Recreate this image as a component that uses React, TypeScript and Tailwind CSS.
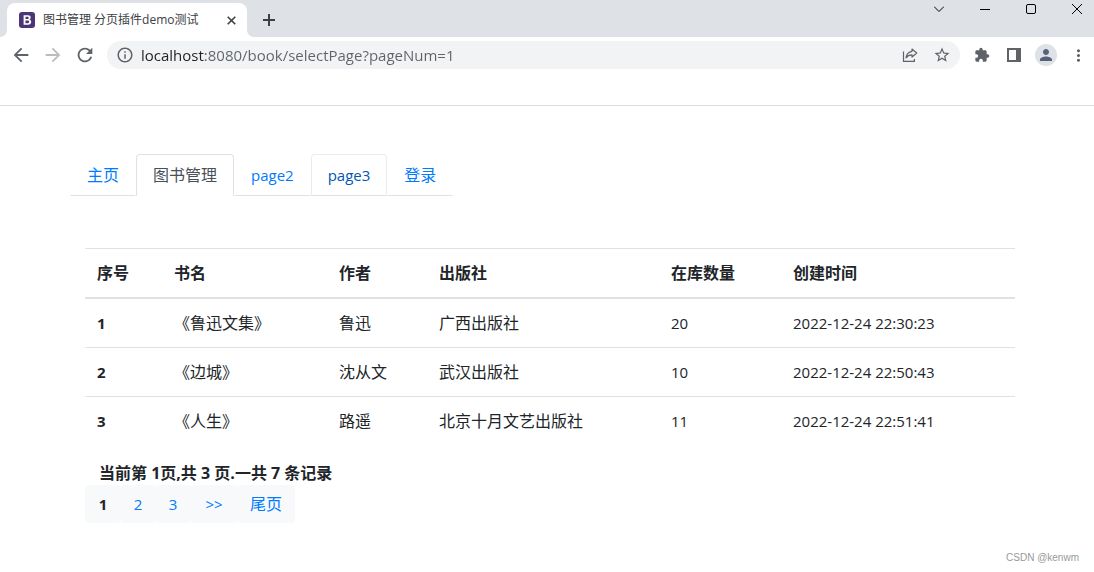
import { useState } from "react";
import {
  MdArrowBack,
  MdArrowForward,
  MdExtension,
  MdInfoOutline,
  MdMoreVert,
  MdPerson,
  MdRefresh,
  MdStarBorder,
} from "react-icons/md";

type Book = {
  id: number;
  name: string;
  author: string;
  press: string;
  count: number;
  createTime: string;
};

const books: Book[] = [
  { id: 1, name: "《鲁迅文集》", author: "鲁迅", press: "广西出版社", count: 20, createTime: "2022-12-24 22:30:23" },
  { id: 2, name: "《边城》", author: "沈从文", press: "武汉出版社", count: 10, createTime: "2022-12-24 22:50:43" },
  { id: 3, name: "《人生》", author: "路遥", press: "北京十月文艺出版社", count: 11, createTime: "2022-12-24 22:51:41" },
];

const columns = [
  { title: "序号", width: "w-[77px]" },
  { title: "书名", width: "w-[165px]" },
  { title: "作者", width: "w-[100px]" },
  { title: "出版社", width: "w-[232px]" },
  { title: "在库数量", width: "w-[122px]" },
  { title: "创建时间", width: "" },
];

const tabs = [
  { title: "主页", style: "text-base border-transparent border-b-[#dee2e6] text-[#007bff]" },
  { title: "图书管理", style: "text-base border-[#dee2e6] border-b-white text-[#495057]" },
  { title: "page2", style: "text-[15px] border-transparent border-b-[#dee2e6] text-[#007bff]" },
  { title: "page3", style: "text-[15px] border-[#e9ecef] border-b-[#dee2e6] text-[#0056b3]" },
  { title: "登录", style: "text-base border-transparent border-b-[#dee2e6] text-[#007bff]" },
];

const pages = [
  { title: "1", style: "min-w-9 text-[15px] font-bold" },
  { title: "2", style: "min-w-9 text-[15px] text-[#007bff]" },
  { title: "3", style: "min-w-9 text-[15px] text-[#007bff]" },
  { title: ">>", style: "min-w-12 text-[15px] text-[#007bff]" },
  { title: "尾页", style: "text-base text-[#007bff]" },
];

const TabStrip = () => (
  <div className="flex h-[37px] justify-between bg-[#dee1e6]">
    <div className="flex items-end">
      {/* Curves at the foot of the active tab */}
      <svg className="h-[7px] w-[7px]" viewBox="0 0 7 7" fill="#fff" aria-hidden="true">
        <path d="M7 0v7H0a7 7 0 0 0 7-7z" />
      </svg>
      <div className="flex h-[34px] w-60 items-center rounded-t-lg bg-white pl-3 pr-2">
        <svg className="h-4 w-4 shrink-0" viewBox="0 0 16 16" aria-hidden="true">
          <rect width="16" height="16" rx="3" fill="#4b3576" />
          <path
            d="M4.6 3.200h4.400c1.700 0 2.700.8 2.700 2.200 0 1-.6 1.800-1.500 2.100 1.200.2 2 1.100 2 2.300 0 1.800-1.200 2.900-3.100 2.900H4.600z M6.500 7h1.700c1 0 1.500-.4 1.500-1.200s-.5-1.100-1.400-1.100H6.500z M6.500 11.200h2c1.100 0 1.700-.5 1.700-1.400s-.6-1.400-1.800-1.400H6.500z"
            fill="#fff"
            fillRule="evenodd"
          />
        </svg>
        <span className="ml-2 flex-1 truncate text-xs text-[#3c4043]">图书管理 分页插件demo测试</span>
        <button type="button" aria-label="关闭标签页" className="flex h-4 w-4 items-center justify-center">
          <svg className="h-[9px] w-[9px]" viewBox="0 0 9 9" stroke="#3c4043" strokeWidth="1.6">
            <path d="M.7.7l7.600 7.600M8.300.7L.7 8.300" />
          </svg>
        </button>
      </div>
      <svg className="h-[7px] w-[7px]" viewBox="0 0 7 7" fill="#fff" aria-hidden="true">
        <path d="M0 0v7h7a7 7 0 0 1-7-7z" />
      </svg>
      <button type="button" aria-label="新标签页" className="ml-[7px] flex h-[34px] w-4 items-center justify-center">
        <svg className="h-3 w-3" viewBox="0 0 12 12" stroke="#3c4043" strokeWidth="2">
          <path d="M6 0v12M0 6h12" />
        </svg>
      </button>
    </div>

    <div className="flex h-[18px] items-center gap-9 pr-3">
      <button type="button" aria-label="搜索标签页">
        <svg className="h-[10px] w-[10px]" viewBox="0 0 10 10" fill="none" stroke="#000">
          <path d="M0 2.500l5 5 5-5" />
        </svg>
      </button>
      <button type="button" aria-label="最小化">
        <svg className="h-[10px] w-[10px]" viewBox="0 0 10 10" stroke="#000">
          <path d="M0 5.500h10" />
        </svg>
      </button>
      <button type="button" aria-label="最大化">
        <svg className="h-[10px] w-[10px]" viewBox="0 0 10 10" fill="none" stroke="#000">
          <rect x=".5" y=".5" width="9" height="9" rx="1.500" />
        </svg>
      </button>
      <button type="button" aria-label="关闭">
        <svg className="h-[10px] w-[10px]" viewBox="0 0 10 10" stroke="#000">
          <path d="M0 0l10 10M10 0L0 10" />
        </svg>
      </button>
    </div>
  </div>
);

const toolButton = "flex h-7 w-8 shrink-0 items-center justify-center";

const Toolbar = () => {
  const [url, setUrl] = useState("localhost:8080/book/selectPage?pageNum=1");

  return (
    <div className="flex h-9 items-center pl-[5px] text-[#5f6368]">
      <button type="button" aria-label="后退" className={toolButton}>
        <MdArrowBack size={22} />
      </button>
      <button type="button" aria-label="前进" className={`${toolButton} text-[#babcbe]`}>
        <MdArrowForward size={22} />
      </button>
      <button type="button" aria-label="重新加载" className={toolButton}>
        <MdRefresh size={22} />
      </button>

      <div className="mx-1.5 flex h-7 flex-1 items-center rounded-full bg-[#f1f3f4] pl-[9px] pr-0.5">
        <MdInfoOutline size={18} className="shrink-0" />
        {/* host part is darker than the path */}
        <input
          type="text"
          aria-label="地址栏"
          value={url}
          onChange={(e) => setUrl(e.target.value)}
          className="ml-[7px] min-w-0 flex-1 bg-[linear-gradient(to_right,#202124_64px,#5f6368_64px)] bg-clip-text text-[15px] text-transparent caret-black outline-none"
        />
        <button type="button" aria-label="分享" className={toolButton}>
          <svg className="h-4 w-4" viewBox="0 0 16 16" fill="none" stroke="currentColor" strokeWidth="1.2">
            <path d="M1.500 4.500v9.900h10.900v-2.400" />
            <path d="M10 2l4.700 4-4.700 4V7.900c-2.500 0-4.500.8-6 2.900.5-3.500 2.600-6 6-6.500z" strokeLinejoin="round" />
          </svg>
        </button>
        <button type="button" aria-label="收藏" className={toolButton}>
          <MdStarBorder size={18} />
        </button>
      </div>

      <button type="button" aria-label="扩展程序" className={toolButton}>
        <MdExtension size={16} />
      </button>
      <button type="button" aria-label="侧边栏" className={toolButton}>
        <svg className="h-[14px] w-[14px]" viewBox="0 0 14 14" fill="currentColor">
          <path d="M0 0h14v14H0z M2 2v10h7V2z" fillRule="evenodd" />
        </svg>
      </button>
      <button type="button" aria-label="用户" className={toolButton}>
        <span className="flex h-[22px] w-[22px] items-center justify-center rounded-full bg-[#dee1e6] text-[#56617a]">
          <MdPerson size={18} />
        </span>
      </button>
      <button type="button" aria-label="更多" className={toolButton}>
        <MdMoreVert size={19} />
      </button>
    </div>
  );
};

const BookTable = () => (
  <table className="mb-4 w-full table-fixed border-collapse">
    <thead>
      <tr className="border-b-2 border-t border-[#dee2e6]">
        {columns.map((col) => (
          <th key={col.title} scope="col" className={`p-3 text-left font-bold ${col.width}`}>
            {col.title}
          </th>
        ))}
      </tr>
    </thead>
    <tbody>
      {books.map((book) => (
        <tr key={book.id} className="border-t border-[#dee2e6]">
          <th scope="row" className="p-3 text-left text-[15px] font-bold">{book.id}</th>
          <td className="p-3">{book.name}</td>
          <td className="p-3">{book.author}</td>
          <td className="p-3">{book.press}</td>
          <td className="p-3 text-[15px]">{book.count}</td>
          <td className="p-3 text-[15px]">{book.createTime}</td>
        </tr>
      ))}
    </tbody>
  </table>
);

const App = () => {
  return (
    <div className="relative min-h-screen bg-white font-['Open_Sans','Noto_Sans_CJK_SC',sans-serif] text-base text-[#212529]">
      {/* Browser */}
      <header className="h-[106px] border-b border-[#dadce0]">
        <TabStrip />
        <Toolbar />
      </header>

      {/* Page */}
      <main className="pl-[70px] pr-16 pt-12">
        <nav className="flex">
          {tabs.map((tab) => (
            <a key={tab.title} href="#" className={`rounded-t border px-4 py-2 leading-6 ${tab.style}`}>
              {tab.title}
            </a>
          ))}
        </nav>

        <div className="px-[15px] pt-[52px]">
          <BookTable />
          <p className="pl-[14px] font-bold leading-6">当前第 1页,共 3 页.一共 7 条记录</p>
          <div className="flex">
            {pages.map((page) => (
              <button
                key={page.title}
                type="button"
                className={`-mr-px rounded border border-[#f8f9fa] bg-[#f8f9fa] px-3 py-1.5 leading-6 ${page.style}`}
              >
                {page.title}
              </button>
            ))}
          </div>
        </div>
      </main>

      <span className="absolute bottom-1.5 right-[15px] font-['Liberation_Sans',sans-serif] text-[10px] leading-4 text-[#999]">
        CSDN @kenwm
      </span>
    </div>
  );
};

export default App;
